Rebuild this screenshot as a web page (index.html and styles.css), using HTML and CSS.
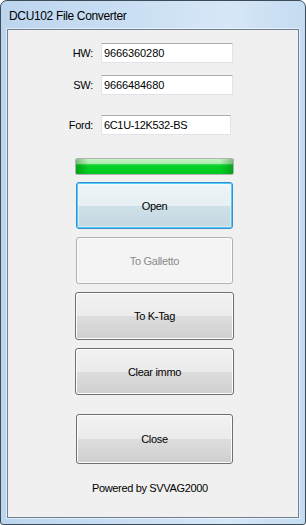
FILE: index.html
```html
<!DOCTYPE html>
<html>
<head>
<meta charset="utf-8">
<link rel="stylesheet" href="styles.css">
</head>
<body>
<div class="window">
  <div class="titlebar"><span class="title">DCU102 File Converter</span></div>
  <div class="client">
    <div class="form">
      <div class="row"><span class="label">HW:</span><div class="input">9666360280</div></div>
      <div class="row sw"><span class="label">SW:</span><div class="input">9666484680</div></div>
      <div class="row ford"><span class="label">Ford:</span><div class="input narrow">6C1U-12K532-BS</div></div>
    </div>
    <div class="progress"><div class="fill"></div></div>
    <div class="btn default">Open</div>
    <div class="btn disabled">To Galletto</div>
    <div class="btn wide tall">To K-Tag</div>
    <div class="btn wide">Clear immo</div>
    <div class="btn close">Close</div>
    <p class="footer">Powered by SVVAG2000</p>
  </div>
</div>
</body>
</html>
```
FILE: styles.css
```css
* { box-sizing: border-box; }
html, body { margin: 0; padding: 0; background: #ffffff; }
body { width: 306px; height: 525px; overflow: hidden; }

.window {
  width: 306px;
  height: 525px;
  border: 1px solid #3d4a57;
  border-radius: 7px 7px 3px 3px;
  padding: 0 6px 6px 6px;
  background: linear-gradient(to right, #bcd5ee 0%, #c9def3 40%, #d6e7f7 75%, #c4dbf1 100%);
  display: flex;
  flex-direction: column;
}

.titlebar {
  height: 28px;
  display: flex;
  align-items: center;
  padding-left: 2px;
  padding-top: 1px;
}
.title {
  font-family: "Liberation Sans", Arial, sans-serif;
  font-size: 12px;
  letter-spacing: -0.35px;
  color: #000;
}

.client {
  height: 489px;
  border: 1px solid #6f7f90;
  background: #f0f0f0;
  display: flex;
  flex-direction: column;
  font-family: "Liberation Sans", Arial, sans-serif;
  font-size: 11px;
  color: #000;
  box-shadow: 0 0 0 1px rgba(255,255,255,0.55);
}

.form {
  display: flex;
  flex-direction: column;
  margin-top: 13px;
}
.row {
  display: grid;
  grid-template-columns: 85px auto;
  column-gap: 8px;
  align-items: center;
  height: 20px;
}
.row.sw { margin-top: 12px; }
.row.ford { margin-top: 20px; }
.label {
  text-align: right;
  letter-spacing: -0.3px;
  color: #000;
}
.input {
  width: 132px;
  height: 20px;
  background: #fff;
  border: 1px solid #e2e3ea;
  border-top-color: #abadb3;
  padding: 2px 0 0 2px;
  line-height: 14px;
  letter-spacing: -0.1px;
}
.input.narrow { width: 130px; letter-spacing: -0.35px; }

.progress {
  margin: 23px 0 0 67px;
  width: 159px;
  height: 17px;
  border: 1px solid #b2b2b2;
  border-radius: 2px;
  background: #e6e6e6;
  padding: 0;
  overflow: hidden;
}
.fill {
  width: 100%;
  height: 100%;
  background:
    linear-gradient(to right, rgba(0,90,10,0.35) 0%, rgba(0,90,10,0) 8%, rgba(0,90,10,0) 92%, rgba(0,90,10,0.35) 100%),
    linear-gradient(to bottom, #c9f3c6 0%, #a8ecab 30%, #3fd954 36%, #06d126 45%, #03c91f 100%);
}

.btn {
  margin: 8px 0 0 68px;
  width: 157px;
  height: 47px;
  border: 1px solid #707070;
  border-radius: 3px;
  display: flex;
  align-items: center;
  justify-content: center;
  letter-spacing: -0.3px;
  color: #000;
  background: linear-gradient(to bottom, #f2f2f2 0%, #ebebeb 50%, #dddddd 51%, #cfcfcf 100%);
  box-shadow: inset 0 0 0 1px #fcfcfc;
}
.btn.default {
  margin-top: 7px;
  border-color: #3c8bd0;
  background: linear-gradient(to bottom, #eef4f7 0%, #e6eff3 50%, #cfe0e8 51%, #c4d8e1 100%);
  box-shadow: inset 0 0 0 1px #48d1f7, inset 0 0 0 2px rgba(255,255,255,0.4);
}
.btn.disabled {
  border-color: #adb2b5;
  background: #f4f4f4;
  color: #8b8b8b;
  box-shadow: inset 0 0 0 1px #fcfcfc;
}
.btn.wide { margin-left: 67px; width: 159px; }
.btn.tall { height: 48px; }
.btn.close { margin-top: 19px; height: 50px; }

.footer {
  margin: 18px 0 0 0;
  padding-left: 84px;
  line-height: 13px;
  letter-spacing: -0.35px;
}
```
